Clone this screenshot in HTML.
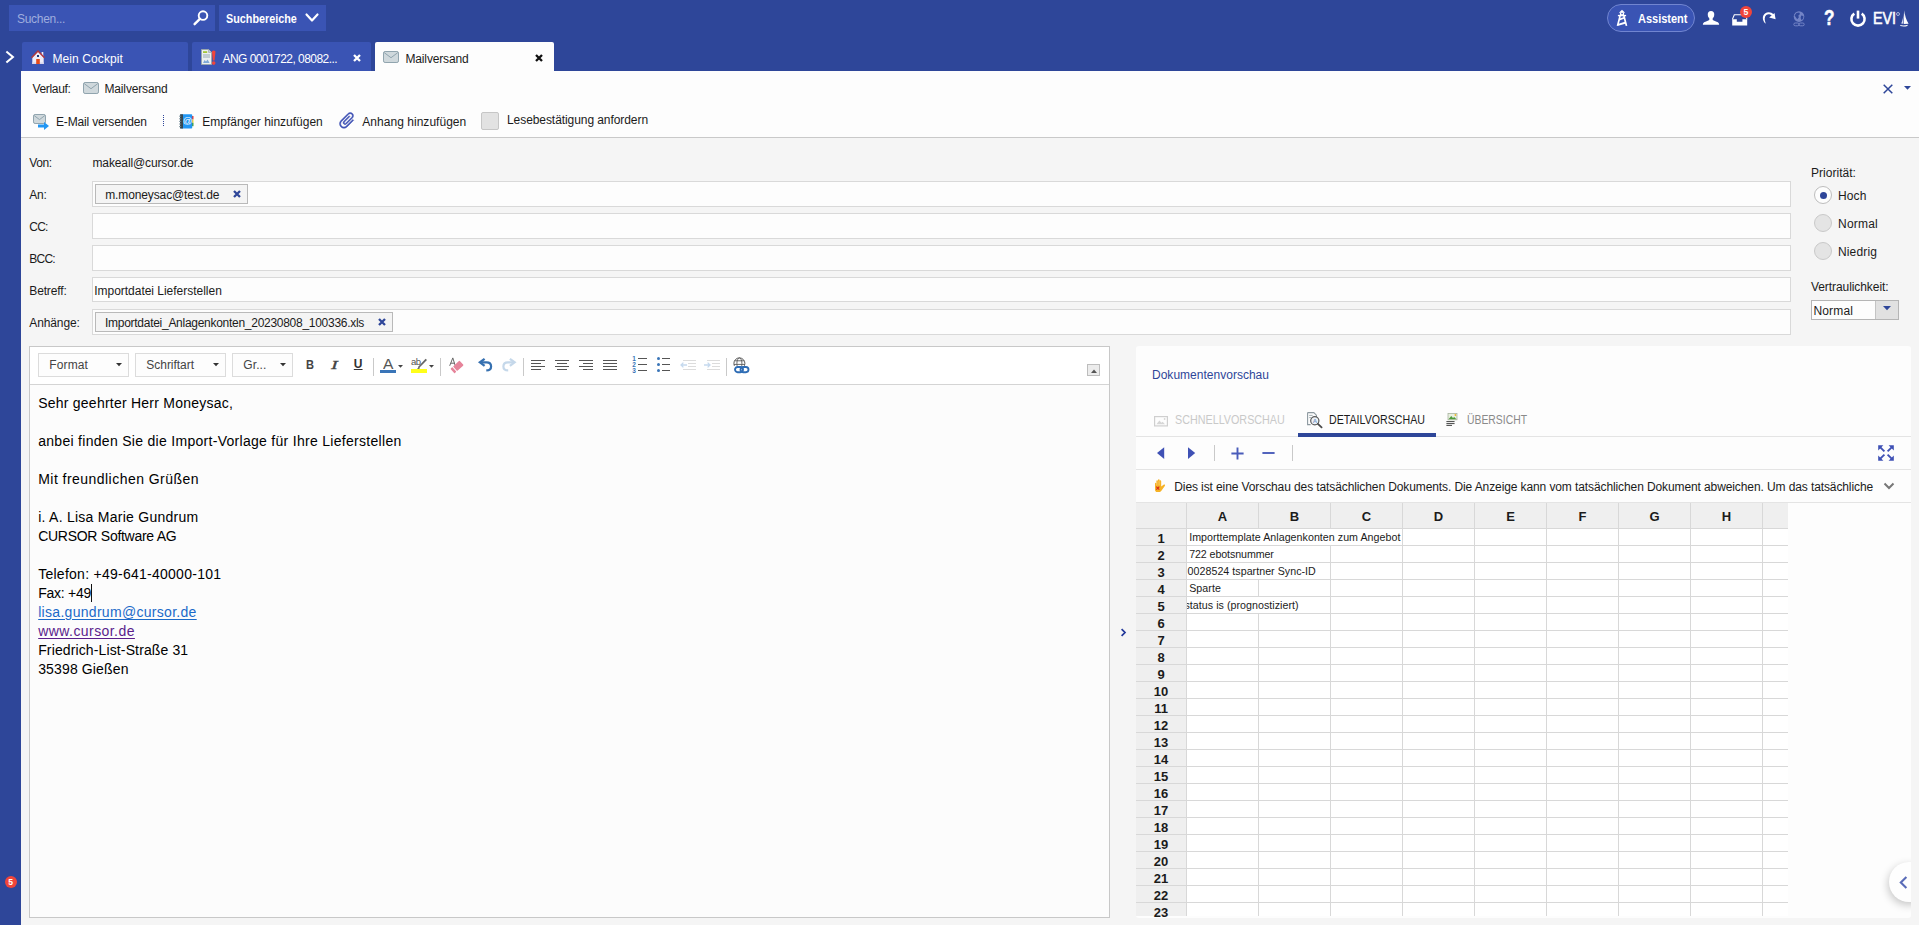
<!DOCTYPE html><html><head><meta charset="utf-8"><title>Mailversand</title><style>html,body{margin:0;padding:0;overflow:hidden;background:#f5f5f5}body{width:1919px;height:925px;position:relative;font-family:'Liberation Sans',sans-serif}svg{display:block;overflow:visible}</style></head><body>
<div style="position:absolute;left:0px;top:0px;width:1919px;height:925px;box-sizing:border-box;background:#f5f5f5;"></div>
<div style="position:absolute;left:0px;top:0px;width:1919px;height:71px;box-sizing:border-box;background:#2e4699;"></div>
<div style="position:absolute;left:0px;top:0px;width:21px;height:925px;box-sizing:border-box;background:#2e4699;"></div>
<div style="position:absolute;left:21px;top:71px;width:1898px;height:66px;box-sizing:border-box;background:#fdfdfd;"></div>
<div style="position:absolute;left:21px;top:137px;width:1898px;height:1px;box-sizing:border-box;background:#c9c9c9;"></div>
<div style="position:absolute;left:9px;top:5px;width:206px;height:26px;box-sizing:border-box;background:#3a54b4;"></div>
<span style="position:absolute;left:17px;top:9.5px;line-height:18px;height:18px;white-space:pre;font-family:'Liberation Sans',sans-serif;font-size:12px;font-weight:400;font-style:normal;color:#9fadde;letter-spacing:-0.300px;">Suchen...</span>
<svg style="position:absolute;left:192px;top:9px;" width="18" height="18" viewBox="0 0 18 18"><circle cx="11" cy="6.6" r="4.3" fill="none" stroke="#fff" stroke-width="1.9"/><path d="M7.9 9.8 L2.6 15.2" stroke="#fff" stroke-width="2.4" stroke-linecap="round"/></svg>
<div style="position:absolute;left:219px;top:5px;width:107px;height:26px;box-sizing:border-box;background:#3a54b4;"></div>
<span style="position:absolute;left:226.3px;top:9.5px;line-height:18px;height:18px;white-space:pre;font-family:'Liberation Sans',sans-serif;font-size:12px;font-weight:700;font-style:normal;color:#fff;letter-spacing:0.000px;transform-origin:0 50%;transform:scaleX(0.8996);">Suchbereiche</span>
<svg style="position:absolute;left:305px;top:13px;" width="14" height="10" viewBox="0 0 14 10"><path d="M1.5 1.5 L7 7.5 L12.5 1.5" fill="none" stroke="#fff" stroke-width="2.2" stroke-linecap="round" stroke-linejoin="round"/></svg>
<div style="position:absolute;left:1607px;top:4px;width:88px;height:28px;box-sizing:border-box;background:#3a54b4;border:1px solid #7185d0;border-radius:14px;"></div>
<span style="position:absolute;left:1637.5px;top:9.5px;line-height:18px;height:18px;white-space:pre;font-family:'Liberation Sans',sans-serif;font-size:12px;font-weight:700;font-style:normal;color:#fff;letter-spacing:0.000px;transform-origin:0 50%;transform:scaleX(0.9161);">Assistent</span>
<svg style="position:absolute;left:5px;top:50px;" width="10" height="14" viewBox="0 0 10 14"><path d="M2.2 2.2 L7.9 7 L2.2 11.8" fill="none" stroke="#fff" stroke-width="2.1" stroke-linecap="square" stroke-linejoin="miter"/></svg>
<div style="position:absolute;left:22px;top:42px;width:166px;height:29px;box-sizing:border-box;background:#3a54b4;border-radius:2px 2px 0 0;"></div>
<span style="position:absolute;left:52.5px;top:49.5px;line-height:18px;height:18px;white-space:pre;font-family:'Liberation Sans',sans-serif;font-size:12px;font-weight:400;font-style:normal;color:#fff;letter-spacing:0.095px;">Mein Cockpit</span>
<div style="position:absolute;left:192px;top:42px;width:179px;height:29px;box-sizing:border-box;background:#3a54b4;border-radius:2px 2px 0 0;"></div>
<span style="position:absolute;left:222.5px;top:49.5px;line-height:18px;height:18px;white-space:pre;font-family:'Liberation Sans',sans-serif;font-size:12px;font-weight:400;font-style:normal;color:#fff;letter-spacing:-0.552px;">ANG 0001722, 08082...</span>
<div style="position:absolute;left:375px;top:42px;width:179px;height:29px;box-sizing:border-box;background:#fdfdfd;border-radius:2px 2px 0 0;"></div>
<span style="position:absolute;left:405.5px;top:49.5px;line-height:18px;height:18px;white-space:pre;font-family:'Liberation Sans',sans-serif;font-size:12px;font-weight:400;font-style:normal;color:#1b1b1b;letter-spacing:-0.155px;">Mailversand</span>
<span style="position:absolute;left:32.5px;top:79.5px;line-height:18px;height:18px;white-space:pre;font-family:'Liberation Sans',sans-serif;font-size:12px;font-weight:400;font-style:normal;color:#1b1b1b;letter-spacing:-0.338px;">Verlauf:</span>
<span style="position:absolute;left:104.5px;top:79.5px;line-height:18px;height:18px;white-space:pre;font-family:'Liberation Sans',sans-serif;font-size:12px;font-weight:400;font-style:normal;color:#1b1b1b;letter-spacing:-0.155px;">Mailversand</span>
<span style="position:absolute;left:56px;top:112.5px;line-height:18px;height:18px;white-space:pre;font-family:'Liberation Sans',sans-serif;font-size:12px;font-weight:400;font-style:normal;color:#1b1b1b;letter-spacing:-0.167px;">E-Mail versenden</span>
<span style="position:absolute;left:202.3px;top:112.5px;line-height:18px;height:18px;white-space:pre;font-family:'Liberation Sans',sans-serif;font-size:12px;font-weight:400;font-style:normal;color:#1b1b1b;letter-spacing:-0.018px;">Empfänger hinzufügen</span>
<span style="position:absolute;left:362.3px;top:112.5px;line-height:18px;height:18px;white-space:pre;font-family:'Liberation Sans',sans-serif;font-size:12px;font-weight:400;font-style:normal;color:#1b1b1b;letter-spacing:0.033px;">Anhang hinzufügen</span>
<div style="position:absolute;left:481px;top:112px;width:18px;height:18px;box-sizing:border-box;background:#e2e2e2;border:1px solid #c6c6c6;border-radius:2px;"></div>
<span style="position:absolute;left:507px;top:111.0px;line-height:18px;height:18px;white-space:pre;font-family:'Liberation Sans',sans-serif;font-size:12px;font-weight:400;font-style:normal;color:#1b1b1b;letter-spacing:-0.071px;">Lesebestätigung anfordern</span>
<span style="position:absolute;left:29.3px;top:154.0px;line-height:18px;height:18px;white-space:pre;font-family:'Liberation Sans',sans-serif;font-size:12px;font-weight:400;font-style:normal;color:#1b1b1b;letter-spacing:-0.433px;">Von:</span>
<span style="position:absolute;left:29.3px;top:186.0px;line-height:18px;height:18px;white-space:pre;font-family:'Liberation Sans',sans-serif;font-size:12px;font-weight:400;font-style:normal;color:#1b1b1b;letter-spacing:-0.239px;">An:</span>
<span style="position:absolute;left:29.3px;top:218.0px;line-height:18px;height:18px;white-space:pre;font-family:'Liberation Sans',sans-serif;font-size:12px;font-weight:400;font-style:normal;color:#1b1b1b;letter-spacing:-0.791px;">CC:</span>
<span style="position:absolute;left:29.3px;top:250.0px;line-height:18px;height:18px;white-space:pre;font-family:'Liberation Sans',sans-serif;font-size:12px;font-weight:400;font-style:normal;color:#1b1b1b;letter-spacing:-0.793px;">BCC:</span>
<span style="position:absolute;left:29.3px;top:281.7px;line-height:18px;height:18px;white-space:pre;font-family:'Liberation Sans',sans-serif;font-size:12px;font-weight:400;font-style:normal;color:#1b1b1b;letter-spacing:-0.146px;">Betreff:</span>
<span style="position:absolute;left:29.3px;top:313.8px;line-height:18px;height:18px;white-space:pre;font-family:'Liberation Sans',sans-serif;font-size:12px;font-weight:400;font-style:normal;color:#1b1b1b;letter-spacing:-0.124px;">Anhänge:</span>
<span style="position:absolute;left:92.5px;top:154.0px;line-height:18px;height:18px;white-space:pre;font-family:'Liberation Sans',sans-serif;font-size:12px;font-weight:400;font-style:normal;color:#1b1b1b;letter-spacing:-0.123px;">makeall@cursor.de</span>
<div style="position:absolute;left:92px;top:181px;width:1699px;height:26px;box-sizing:border-box;background:#fdfdfd;border:1px solid #d9d9d9;"></div>
<div style="position:absolute;left:92px;top:213px;width:1699px;height:26px;box-sizing:border-box;background:#fdfdfd;border:1px solid #d9d9d9;"></div>
<div style="position:absolute;left:92px;top:245px;width:1699px;height:26px;box-sizing:border-box;background:#fdfdfd;border:1px solid #d9d9d9;"></div>
<div style="position:absolute;left:92px;top:277px;width:1699px;height:25px;box-sizing:border-box;background:#fdfdfd;border:1px solid #d9d9d9;"></div>
<div style="position:absolute;left:92px;top:309px;width:1699px;height:26px;box-sizing:border-box;background:#fdfdfd;border:1px solid #d9d9d9;"></div>
<div style="position:absolute;left:95px;top:184px;width:153px;height:20px;box-sizing:border-box;background:#f4f4f4;border:1px solid #b9b9b9;"></div>
<span style="position:absolute;left:105.2px;top:186.0px;line-height:18px;height:18px;white-space:pre;font-family:'Liberation Sans',sans-serif;font-size:12px;font-weight:400;font-style:normal;color:#1b1b1b;letter-spacing:-0.119px;">m.moneysac@test.de</span>
<div style="position:absolute;left:95px;top:312px;width:298px;height:20px;box-sizing:border-box;background:#f4f4f4;border:1px solid #b9b9b9;"></div>
<span style="position:absolute;left:105px;top:313.8px;line-height:18px;height:18px;white-space:pre;font-family:'Liberation Sans',sans-serif;font-size:12px;font-weight:400;font-style:normal;color:#1b1b1b;letter-spacing:-0.277px;">Importdatei_Anlagenkonten_20230808_100336.xls</span>
<span style="position:absolute;left:94.2px;top:281.7px;line-height:18px;height:18px;white-space:pre;font-family:'Liberation Sans',sans-serif;font-size:12px;font-weight:400;font-style:normal;color:#1b1b1b;letter-spacing:-0.019px;">Importdatei Lieferstellen</span>
<svg style="position:absolute;left:233.4px;top:189.7px;" width="8" height="8" viewBox="0 0 8 8"><path d="M1 1 L7 7 M7 1 L1 7" stroke="#2e4699" stroke-width="2.3" stroke-linecap="butt"/></svg>
<svg style="position:absolute;left:378.3px;top:317.6px;" width="8" height="8" viewBox="0 0 8 8"><path d="M1 1 L7 7 M7 1 L1 7" stroke="#2e4699" stroke-width="2.3" stroke-linecap="butt"/></svg>
<span style="position:absolute;left:1811px;top:164.0px;line-height:18px;height:18px;white-space:pre;font-family:'Liberation Sans',sans-serif;font-size:12px;font-weight:400;font-style:normal;color:#1b1b1b;letter-spacing:0.031px;">Priorität:</span>
<div style="position:absolute;left:1814px;top:186px;width:18px;height:18px;box-sizing:border-box;background:#fdfdfd;border:1px solid #bdbdbd;border-radius:9px;"></div>
<div style="position:absolute;left:1819.5px;top:191.5px;width:7px;height:7px;box-sizing:border-box;background:#2e4699;border-radius:4px;"></div>
<span style="position:absolute;left:1838px;top:186.8px;line-height:18px;height:18px;white-space:pre;font-family:'Liberation Sans',sans-serif;font-size:12px;font-weight:400;font-style:normal;color:#1b1b1b;letter-spacing:0.121px;">Hoch</span>
<div style="position:absolute;left:1814px;top:214px;width:18px;height:18px;box-sizing:border-box;background:#e4e4e4;border:1px solid #c9c9c9;border-radius:9px;"></div>
<span style="position:absolute;left:1838px;top:214.8px;line-height:18px;height:18px;white-space:pre;font-family:'Liberation Sans',sans-serif;font-size:12px;font-weight:400;font-style:normal;color:#1b1b1b;letter-spacing:0.221px;">Normal</span>
<div style="position:absolute;left:1814px;top:242px;width:18px;height:18px;box-sizing:border-box;background:#e4e4e4;border:1px solid #c9c9c9;border-radius:9px;"></div>
<span style="position:absolute;left:1838px;top:242.8px;line-height:18px;height:18px;white-space:pre;font-family:'Liberation Sans',sans-serif;font-size:12px;font-weight:400;font-style:normal;color:#1b1b1b;letter-spacing:0.141px;">Niedrig</span>
<span style="position:absolute;left:1811px;top:278.0px;line-height:18px;height:18px;white-space:pre;font-family:'Liberation Sans',sans-serif;font-size:12px;font-weight:400;font-style:normal;color:#1b1b1b;letter-spacing:-0.075px;">Vertraulichkeit:</span>
<div style="position:absolute;left:1811px;top:300px;width:88px;height:20px;box-sizing:border-box;background:#fdfdfd;border:1px solid #b5b5b5;"></div>
<div style="position:absolute;left:1875px;top:301px;width:23px;height:18px;box-sizing:border-box;background:#e1e1e1;border-left:1px solid #c4c4c4;"></div>
<span style="position:absolute;left:1813.5px;top:301.5px;line-height:18px;height:18px;white-space:pre;font-family:'Liberation Sans',sans-serif;font-size:12px;font-weight:400;font-style:normal;color:#1b1b1b;letter-spacing:0.138px;">Normal</span>
<svg style="position:absolute;left:1883px;top:306px;" width="8" height="5" viewBox="0 0 8 5"><path d="M0 0 L8 0 L4 4.2 Z" fill="#2e4699"/></svg>
<div style="position:absolute;left:29px;top:346px;width:1081px;height:572px;box-sizing:border-box;background:#fcfcfc;border:1px solid #c8c8c8;"></div>
<div style="position:absolute;left:30px;top:347px;width:1079px;height:37px;box-sizing:border-box;background:#ffffff;"></div>
<div style="position:absolute;left:30px;top:384px;width:1079px;height:1px;box-sizing:border-box;background:#d4d4d4;"></div>
<div style="position:absolute;left:38px;top:353px;width:91px;height:24px;box-sizing:border-box;background:#fdfdfd;border:1px solid #dcdcdc;"></div>
<span style="position:absolute;left:49.3px;top:355.8px;line-height:18px;height:18px;white-space:pre;font-family:'Liberation Sans',sans-serif;font-size:12px;font-weight:400;font-style:normal;color:#444;letter-spacing:0.131px;">Format</span>
<svg style="position:absolute;left:116px;top:363.3px;" width="6" height="3.4" viewBox="0 0 6 3.4"><path d="M0 0 L6 0 L3 3.2 Z" fill="#333"/></svg>
<div style="position:absolute;left:135px;top:353px;width:91px;height:24px;box-sizing:border-box;background:#fdfdfd;border:1px solid #dcdcdc;"></div>
<span style="position:absolute;left:146.3px;top:355.8px;line-height:18px;height:18px;white-space:pre;font-family:'Liberation Sans',sans-serif;font-size:12px;font-weight:400;font-style:normal;color:#444;letter-spacing:-0.032px;">Schriftart</span>
<svg style="position:absolute;left:213px;top:363.3px;" width="6" height="3.4" viewBox="0 0 6 3.4"><path d="M0 0 L6 0 L3 3.2 Z" fill="#333"/></svg>
<div style="position:absolute;left:232px;top:353px;width:61px;height:24px;box-sizing:border-box;background:#fdfdfd;border:1px solid #dcdcdc;"></div>
<span style="position:absolute;left:243.3px;top:355.8px;line-height:18px;height:18px;white-space:pre;font-family:'Liberation Sans',sans-serif;font-size:12px;font-weight:400;font-style:normal;color:#444;letter-spacing:0.106px;">Gr...</span>
<svg style="position:absolute;left:280px;top:363.3px;" width="6" height="3.4" viewBox="0 0 6 3.4"><path d="M0 0 L6 0 L3 3.2 Z" fill="#333"/></svg>
<span style="position:absolute;left:306.3px;top:355.8px;line-height:18px;height:18px;white-space:pre;font-family:'Liberation Sans',sans-serif;font-size:12px;font-weight:700;font-style:normal;color:#444;letter-spacing:0.000px;transform-origin:0 50%;transform:scaleX(0.9225);">B</span>
<span style="position:absolute;left:331.2px;top:354.6px;line-height:20px;height:20px;white-space:pre;font-family:'Liberation Serif',sans-serif;font-size:13.5px;font-weight:400;font-style:italic;color:#444;letter-spacing:0.000px;-webkit-text-stroke:0.3px #444;transform-origin:0 50%;transform:scaleX(1.5111);">I</span>
<span style="position:absolute;left:353.8px;top:355.3px;line-height:18px;height:18px;white-space:pre;font-family:'Liberation Sans',sans-serif;font-size:12px;font-weight:700;font-style:normal;color:#333;letter-spacing:0.064px;text-decoration:underline;">U</span>
<div style="position:absolute;left:373px;top:358px;width:1px;height:18px;box-sizing:border-box;background:#c9c9c9;"></div>
<div style="position:absolute;left:440px;top:358px;width:1px;height:18px;box-sizing:border-box;background:#c9c9c9;"></div>
<div style="position:absolute;left:523px;top:358px;width:1px;height:18px;box-sizing:border-box;background:#c9c9c9;"></div>
<div style="position:absolute;left:726px;top:358px;width:1px;height:18px;box-sizing:border-box;background:#c9c9c9;"></div>
<span style="position:absolute;left:38.2px;top:392.5px;line-height:20px;height:20px;white-space:pre;font-family:'Liberation Sans',sans-serif;font-size:14px;font-weight:400;font-style:normal;color:#000000;letter-spacing:0.235px;">Sehr geehrter Herr Moneysac,</span>
<span style="position:absolute;left:38.2px;top:430.5px;line-height:20px;height:20px;white-space:pre;font-family:'Liberation Sans',sans-serif;font-size:14px;font-weight:400;font-style:normal;color:#000000;letter-spacing:0.294px;">anbei finden Sie die Import-Vorlage für Ihre Lieferstellen</span>
<span style="position:absolute;left:38.2px;top:468.5px;line-height:20px;height:20px;white-space:pre;font-family:'Liberation Sans',sans-serif;font-size:14px;font-weight:400;font-style:normal;color:#000000;letter-spacing:0.461px;">Mit freundlichen Grüßen</span>
<span style="position:absolute;left:38.2px;top:506.5px;line-height:20px;height:20px;white-space:pre;font-family:'Liberation Sans',sans-serif;font-size:14px;font-weight:400;font-style:normal;color:#000000;letter-spacing:0.256px;">i. A. Lisa Marie Gundrum</span>
<span style="position:absolute;left:38.2px;top:525.5px;line-height:20px;height:20px;white-space:pre;font-family:'Liberation Sans',sans-serif;font-size:14px;font-weight:400;font-style:normal;color:#000000;letter-spacing:-0.275px;">CURSOR Software AG</span>
<span style="position:absolute;left:38.2px;top:563.5px;line-height:20px;height:20px;white-space:pre;font-family:'Liberation Sans',sans-serif;font-size:14px;font-weight:400;font-style:normal;color:#000000;letter-spacing:0.261px;">Telefon: +49-641-40000-101</span>
<span style="position:absolute;left:38.2px;top:582.5px;line-height:20px;height:20px;white-space:pre;font-family:'Liberation Sans',sans-serif;font-size:14px;font-weight:400;font-style:normal;color:#000000;letter-spacing:-0.259px;">Fax: +49</span>
<span style="position:absolute;left:38.2px;top:601.5px;line-height:20px;height:20px;white-space:pre;font-family:'Liberation Sans',sans-serif;font-size:14px;font-weight:400;font-style:normal;color:#1b6ac9;letter-spacing:0.298px;text-decoration:underline;text-decoration-thickness:1px;text-underline-offset:2px;">lisa.gundrum@cursor.de</span>
<span style="position:absolute;left:38.2px;top:620.5px;line-height:20px;height:20px;white-space:pre;font-family:'Liberation Sans',sans-serif;font-size:14px;font-weight:400;font-style:normal;color:#5a1d8c;letter-spacing:0.435px;text-decoration:underline;text-decoration-thickness:1px;text-underline-offset:2px;">www.cursor.de</span>
<span style="position:absolute;left:38.2px;top:639.5px;line-height:20px;height:20px;white-space:pre;font-family:'Liberation Sans',sans-serif;font-size:14px;font-weight:400;font-style:normal;color:#000000;letter-spacing:0.127px;">Friedrich-List-Straße 31</span>
<span style="position:absolute;left:38.2px;top:658.5px;line-height:20px;height:20px;white-space:pre;font-family:'Liberation Sans',sans-serif;font-size:14px;font-weight:400;font-style:normal;color:#000000;letter-spacing:0.139px;">35398 Gießen</span>
<div style="position:absolute;left:91px;top:584px;width:1px;height:18px;box-sizing:border-box;background:#111;"></div>
<div style="position:absolute;left:1087px;top:364px;width:13px;height:12px;box-sizing:border-box;background:#ececec;border:1px solid #bdbdbd;"></div>
<svg style="position:absolute;left:1090.5px;top:368.5px;" width="6" height="4" viewBox="0 0 6 4"><path d="M0 4 L6 4 L3 0.4 Z" fill="#555"/></svg>
<svg style="position:absolute;left:1119.5px;top:628px;" width="7" height="9" viewBox="0 0 7 9"><path d="M1.6 1.1 L5 4.5 L1.6 7.9" fill="none" stroke="#22389a" stroke-width="1.7"/></svg>
<div style="position:absolute;left:1136px;top:346px;width:775px;height:572px;box-sizing:border-box;background:#fdfdfd;border-radius:3px;"></div>
<span style="position:absolute;left:1152px;top:365.6px;line-height:18px;height:18px;white-space:pre;font-family:'Liberation Sans',sans-serif;font-size:12px;font-weight:400;font-style:normal;color:#2e4699;letter-spacing:0.015px;">Dokumentenvorschau</span>
<span style="position:absolute;left:1175.4px;top:410.6px;line-height:18px;height:18px;white-space:pre;font-family:'Liberation Sans',sans-serif;font-size:12.3px;font-weight:400;font-style:normal;color:#c9c9c9;letter-spacing:0.000px;transform-origin:0 50%;transform:scaleX(0.8748);">SCHNELLVORSCHAU</span>
<span style="position:absolute;left:1328.5px;top:410.6px;line-height:18px;height:18px;white-space:pre;font-family:'Liberation Sans',sans-serif;font-size:12.3px;font-weight:400;font-style:normal;color:#1b1b1b;letter-spacing:0.000px;transform-origin:0 50%;transform:scaleX(0.8646);">DETAILVORSCHAU</span>
<span style="position:absolute;left:1466.5px;top:410.6px;line-height:18px;height:18px;white-space:pre;font-family:'Liberation Sans',sans-serif;font-size:12.3px;font-weight:400;font-style:normal;color:#8a8a8a;letter-spacing:0.000px;transform-origin:0 50%;transform:scaleX(0.8443);">ÜBERSICHT</span>
<div style="position:absolute;left:1136px;top:436px;width:775px;height:1px;box-sizing:border-box;background:#e4e4e4;"></div>
<div style="position:absolute;left:1298px;top:433px;width:138px;height:4px;box-sizing:border-box;background:#2e4699;"></div>
<div style="position:absolute;left:1136px;top:469px;width:775px;height:1px;box-sizing:border-box;background:#e4e4e4;"></div>
<div style="position:absolute;left:1136px;top:502px;width:775px;height:1px;box-sizing:border-box;background:#e4e4e4;"></div>
<svg style="position:absolute;left:1156px;top:447px;" width="9" height="12" viewBox="0 0 9 12"><path d="M8.2 0.3 L8.2 11.9 L1 6.1 Z" fill="#3f51b5"/></svg>
<svg style="position:absolute;left:1187px;top:447px;" width="9" height="12" viewBox="0 0 9 12"><path d="M1 0.3 L1 11.9 L8.2 6.1 Z" fill="#3f51b5"/></svg>
<div style="position:absolute;left:1214px;top:445px;width:1px;height:16px;box-sizing:border-box;background:#c9c9c9;"></div>
<svg style="position:absolute;left:1231px;top:446.5px;" width="13" height="13" viewBox="0 0 13 13"><path d="M6.5 0.4 V12.6 M0.4 6.5 H12.6" stroke="#4a5cba" stroke-width="1.9"/></svg>
<svg style="position:absolute;left:1261.5px;top:452px;" width="13" height="2" viewBox="0 0 13 2"><path d="M0.4 1 H12.6" stroke="#4a5cba" stroke-width="1.9"/></svg>
<div style="position:absolute;left:1291.5px;top:445px;width:1px;height:16px;box-sizing:border-box;background:#c9c9c9;"></div>
<span style="position:absolute;left:1174.3px;top:477.8px;line-height:18px;height:18px;white-space:pre;font-family:'Liberation Sans',sans-serif;font-size:12px;font-weight:400;font-style:normal;color:#1b1b1b;letter-spacing:-0.103px;">Dies ist eine Vorschau des tatsächlichen Dokuments. Die Anzeige kann vom tatsächlichen Dokument abweichen. Um das tatsächliche</span>
<svg style="position:absolute;left:1883px;top:481.6px;" width="12" height="8" viewBox="0 0 12 8"><path d="M1.5 1.5 L6 6 L10.5 1.5" fill="none" stroke="#777" stroke-width="2"/></svg>
<div style="position:absolute;left:1136px;top:503px;width:652px;height:413px;box-sizing:border-box;background:#ffffff;"></div><div style="position:absolute;left:1136px;top:503px;width:652px;height:25px;box-sizing:border-box;background:#efefef;"></div><div style="position:absolute;left:1136px;top:503px;width:50px;height:413px;box-sizing:border-box;background:#efefef;"></div><div style="position:absolute;left:1186px;top:503px;width:1px;height:413px;box-sizing:border-box;background:#d8d8d8;"></div><div style="position:absolute;left:1258px;top:503px;width:1px;height:413px;box-sizing:border-box;background:#d8d8d8;"></div><div style="position:absolute;left:1330px;top:503px;width:1px;height:413px;box-sizing:border-box;background:#d8d8d8;"></div><div style="position:absolute;left:1402px;top:503px;width:1px;height:413px;box-sizing:border-box;background:#d8d8d8;"></div><div style="position:absolute;left:1474px;top:503px;width:1px;height:413px;box-sizing:border-box;background:#d8d8d8;"></div><div style="position:absolute;left:1546px;top:503px;width:1px;height:413px;box-sizing:border-box;background:#d8d8d8;"></div><div style="position:absolute;left:1618px;top:503px;width:1px;height:413px;box-sizing:border-box;background:#d8d8d8;"></div><div style="position:absolute;left:1690px;top:503px;width:1px;height:413px;box-sizing:border-box;background:#d8d8d8;"></div><div style="position:absolute;left:1762px;top:503px;width:1px;height:413px;box-sizing:border-box;background:#d8d8d8;"></div><div style="position:absolute;left:1136px;top:528px;width:652px;height:1px;box-sizing:border-box;background:#d8d8d8;"></div><div style="position:absolute;left:1136px;top:545px;width:652px;height:1px;box-sizing:border-box;background:#d8d8d8;"></div><div style="position:absolute;left:1136px;top:562px;width:652px;height:1px;box-sizing:border-box;background:#d8d8d8;"></div><div style="position:absolute;left:1136px;top:579px;width:652px;height:1px;box-sizing:border-box;background:#d8d8d8;"></div><div style="position:absolute;left:1136px;top:596px;width:652px;height:1px;box-sizing:border-box;background:#d8d8d8;"></div><div style="position:absolute;left:1136px;top:613px;width:652px;height:1px;box-sizing:border-box;background:#d8d8d8;"></div><div style="position:absolute;left:1136px;top:630px;width:652px;height:1px;box-sizing:border-box;background:#d8d8d8;"></div><div style="position:absolute;left:1136px;top:647px;width:652px;height:1px;box-sizing:border-box;background:#d8d8d8;"></div><div style="position:absolute;left:1136px;top:664px;width:652px;height:1px;box-sizing:border-box;background:#d8d8d8;"></div><div style="position:absolute;left:1136px;top:681px;width:652px;height:1px;box-sizing:border-box;background:#d8d8d8;"></div><div style="position:absolute;left:1136px;top:698px;width:652px;height:1px;box-sizing:border-box;background:#d8d8d8;"></div><div style="position:absolute;left:1136px;top:715px;width:652px;height:1px;box-sizing:border-box;background:#d8d8d8;"></div><div style="position:absolute;left:1136px;top:732px;width:652px;height:1px;box-sizing:border-box;background:#d8d8d8;"></div><div style="position:absolute;left:1136px;top:749px;width:652px;height:1px;box-sizing:border-box;background:#d8d8d8;"></div><div style="position:absolute;left:1136px;top:766px;width:652px;height:1px;box-sizing:border-box;background:#d8d8d8;"></div><div style="position:absolute;left:1136px;top:783px;width:652px;height:1px;box-sizing:border-box;background:#d8d8d8;"></div><div style="position:absolute;left:1136px;top:800px;width:652px;height:1px;box-sizing:border-box;background:#d8d8d8;"></div><div style="position:absolute;left:1136px;top:817px;width:652px;height:1px;box-sizing:border-box;background:#d8d8d8;"></div><div style="position:absolute;left:1136px;top:834px;width:652px;height:1px;box-sizing:border-box;background:#d8d8d8;"></div><div style="position:absolute;left:1136px;top:851px;width:652px;height:1px;box-sizing:border-box;background:#d8d8d8;"></div><div style="position:absolute;left:1136px;top:868px;width:652px;height:1px;box-sizing:border-box;background:#d8d8d8;"></div><div style="position:absolute;left:1136px;top:885px;width:652px;height:1px;box-sizing:border-box;background:#d8d8d8;"></div><div style="position:absolute;left:1136px;top:902px;width:652px;height:1px;box-sizing:border-box;background:#d8d8d8;"></div>
<div style="position:absolute;left:1258px;top:529px;width:1px;height:16px;box-sizing:border-box;background:#ffffff;"></div>
<div style="position:absolute;left:1330px;top:529px;width:1px;height:16px;box-sizing:border-box;background:#ffffff;"></div>
<div style="position:absolute;left:1258px;top:546px;width:1px;height:16px;box-sizing:border-box;background:#ffffff;"></div>
<div style="position:absolute;left:1258px;top:563px;width:1px;height:16px;box-sizing:border-box;background:#ffffff;"></div>
<div style="position:absolute;left:1258px;top:597px;width:1px;height:16px;box-sizing:border-box;background:#ffffff;"></div>
<div style="position:absolute;left:1202.5px;top:508px;width:40px;height:18px;line-height:18px;text-align:center;font-size:13px;font-weight:700;color:#1b1b1b">A</div>
<div style="position:absolute;left:1274.5px;top:508px;width:40px;height:18px;line-height:18px;text-align:center;font-size:13px;font-weight:700;color:#1b1b1b">B</div>
<div style="position:absolute;left:1346.5px;top:508px;width:40px;height:18px;line-height:18px;text-align:center;font-size:13px;font-weight:700;color:#1b1b1b">C</div>
<div style="position:absolute;left:1418.5px;top:508px;width:40px;height:18px;line-height:18px;text-align:center;font-size:13px;font-weight:700;color:#1b1b1b">D</div>
<div style="position:absolute;left:1490.5px;top:508px;width:40px;height:18px;line-height:18px;text-align:center;font-size:13px;font-weight:700;color:#1b1b1b">E</div>
<div style="position:absolute;left:1562.5px;top:508px;width:40px;height:18px;line-height:18px;text-align:center;font-size:13px;font-weight:700;color:#1b1b1b">F</div>
<div style="position:absolute;left:1634.5px;top:508px;width:40px;height:18px;line-height:18px;text-align:center;font-size:13px;font-weight:700;color:#1b1b1b">G</div>
<div style="position:absolute;left:1706.5px;top:508px;width:40px;height:18px;line-height:18px;text-align:center;font-size:13px;font-weight:700;color:#1b1b1b">H</div>
<div style="position:absolute;left:1141px;top:529.7px;width:40px;height:18px;overflow:hidden;line-height:18px;text-align:center;font-size:13px;font-weight:700;color:#1b1b1b">1</div>
<div style="position:absolute;left:1141px;top:546.7px;width:40px;height:18px;overflow:hidden;line-height:18px;text-align:center;font-size:13px;font-weight:700;color:#1b1b1b">2</div>
<div style="position:absolute;left:1141px;top:563.7px;width:40px;height:18px;overflow:hidden;line-height:18px;text-align:center;font-size:13px;font-weight:700;color:#1b1b1b">3</div>
<div style="position:absolute;left:1141px;top:580.7px;width:40px;height:18px;overflow:hidden;line-height:18px;text-align:center;font-size:13px;font-weight:700;color:#1b1b1b">4</div>
<div style="position:absolute;left:1141px;top:597.7px;width:40px;height:18px;overflow:hidden;line-height:18px;text-align:center;font-size:13px;font-weight:700;color:#1b1b1b">5</div>
<div style="position:absolute;left:1141px;top:614.7px;width:40px;height:18px;overflow:hidden;line-height:18px;text-align:center;font-size:13px;font-weight:700;color:#1b1b1b">6</div>
<div style="position:absolute;left:1141px;top:631.7px;width:40px;height:18px;overflow:hidden;line-height:18px;text-align:center;font-size:13px;font-weight:700;color:#1b1b1b">7</div>
<div style="position:absolute;left:1141px;top:648.7px;width:40px;height:18px;overflow:hidden;line-height:18px;text-align:center;font-size:13px;font-weight:700;color:#1b1b1b">8</div>
<div style="position:absolute;left:1141px;top:665.7px;width:40px;height:18px;overflow:hidden;line-height:18px;text-align:center;font-size:13px;font-weight:700;color:#1b1b1b">9</div>
<div style="position:absolute;left:1141px;top:682.7px;width:40px;height:18px;overflow:hidden;line-height:18px;text-align:center;font-size:13px;font-weight:700;color:#1b1b1b">10</div>
<div style="position:absolute;left:1141px;top:699.7px;width:40px;height:18px;overflow:hidden;line-height:18px;text-align:center;font-size:13px;font-weight:700;color:#1b1b1b">11</div>
<div style="position:absolute;left:1141px;top:716.7px;width:40px;height:18px;overflow:hidden;line-height:18px;text-align:center;font-size:13px;font-weight:700;color:#1b1b1b">12</div>
<div style="position:absolute;left:1141px;top:733.7px;width:40px;height:18px;overflow:hidden;line-height:18px;text-align:center;font-size:13px;font-weight:700;color:#1b1b1b">13</div>
<div style="position:absolute;left:1141px;top:750.7px;width:40px;height:18px;overflow:hidden;line-height:18px;text-align:center;font-size:13px;font-weight:700;color:#1b1b1b">14</div>
<div style="position:absolute;left:1141px;top:767.7px;width:40px;height:18px;overflow:hidden;line-height:18px;text-align:center;font-size:13px;font-weight:700;color:#1b1b1b">15</div>
<div style="position:absolute;left:1141px;top:784.7px;width:40px;height:18px;overflow:hidden;line-height:18px;text-align:center;font-size:13px;font-weight:700;color:#1b1b1b">16</div>
<div style="position:absolute;left:1141px;top:801.7px;width:40px;height:18px;overflow:hidden;line-height:18px;text-align:center;font-size:13px;font-weight:700;color:#1b1b1b">17</div>
<div style="position:absolute;left:1141px;top:818.7px;width:40px;height:18px;overflow:hidden;line-height:18px;text-align:center;font-size:13px;font-weight:700;color:#1b1b1b">18</div>
<div style="position:absolute;left:1141px;top:835.7px;width:40px;height:18px;overflow:hidden;line-height:18px;text-align:center;font-size:13px;font-weight:700;color:#1b1b1b">19</div>
<div style="position:absolute;left:1141px;top:852.7px;width:40px;height:18px;overflow:hidden;line-height:18px;text-align:center;font-size:13px;font-weight:700;color:#1b1b1b">20</div>
<div style="position:absolute;left:1141px;top:869.7px;width:40px;height:18px;overflow:hidden;line-height:18px;text-align:center;font-size:13px;font-weight:700;color:#1b1b1b">21</div>
<div style="position:absolute;left:1141px;top:886.7px;width:40px;height:18px;overflow:hidden;line-height:18px;text-align:center;font-size:13px;font-weight:700;color:#1b1b1b">22</div>
<div style="position:absolute;left:1141px;top:903.7px;width:40px;height:13px;overflow:hidden;line-height:18px;text-align:center;font-size:13px;font-weight:700;color:#1b1b1b">23</div>
<span style="position:absolute;left:1189.2px;top:529.4px;line-height:16px;height:16px;white-space:pre;font-family:'Liberation Sans',sans-serif;font-size:10.67px;font-weight:400;font-style:normal;color:#1b1b1b;letter-spacing:0.037px;">Importtemplate Anlagenkonten zum Angebot</span>
<span style="position:absolute;left:1189.2px;top:546.4px;line-height:16px;height:16px;white-space:pre;font-family:'Liberation Sans',sans-serif;font-size:10.67px;font-weight:400;font-style:normal;color:#1b1b1b;letter-spacing:-0.086px;">722 ebotsnummer</span>
<span style="position:absolute;left:1187.6px;top:563.4px;line-height:16px;height:16px;white-space:pre;font-family:'Liberation Sans',sans-serif;font-size:10.67px;font-weight:400;font-style:normal;color:#1b1b1b;letter-spacing:0.034px;">0028524 tspartner Sync-ID</span>
<span style="position:absolute;left:1189.2px;top:580.4px;line-height:16px;height:16px;white-space:pre;font-family:'Liberation Sans',sans-serif;font-size:10.67px;font-weight:400;font-style:normal;color:#1b1b1b;letter-spacing:0.066px;">Sparte</span>
<div style="position:absolute;left:1187px;top:597px;width:120px;height:16px;overflow:hidden"><span style="position:absolute;left:-2.5px;top:0.4px;line-height:16px;height:16px;white-space:pre;font-family:'Liberation Sans',sans-serif;font-size:10.67px;font-weight:400;font-style:normal;color:#1b1b1b;letter-spacing:0.037px;">status is (prognostiziert)</span></div>
<div style="position:absolute;left:4.5px;top:876px;width:12px;height:12px;box-sizing:border-box;background:#f0453a;border-radius:6px;"></div>
<span style="position:absolute;left:8.3px;top:876.3px;line-height:12px;height:12px;white-space:pre;font-family:'Liberation Sans',sans-serif;font-size:8.5px;font-weight:700;font-style:normal;color:#fff;letter-spacing:-0.017px;">5</span>
<div style="position:absolute;left:1860px;top:840px;width:51px;height:78px;overflow:hidden"><div style="position:absolute;left:29px;top:22px;width:40px;height:40px;border-radius:20px;background:#fefefe;box-shadow:-1px 3px 9px rgba(0,0,0,.22)"></div><svg style="position:absolute;left:38.5px;top:35.5px" width="9" height="13" viewBox="0 0 9 13"><path d="M7.4 1 L1.8 6.5 L7.4 12" fill="none" stroke="#5a6cb8" stroke-width="2.1"/></svg></div>
<svg style="position:absolute;left:1883px;top:84px;" width="10" height="10" viewBox="0 0 10 10"><path d="M0.7 0.7 L9.3 9.3 M9.3 0.7 L0.7 9.3" stroke="#2e4699" stroke-width="1.5"/></svg>
<svg style="position:absolute;left:1904px;top:85.5px;" width="7" height="4" viewBox="0 0 7 4"><path d="M0 0 L7 0 L3.5 3.8 Z" fill="#2e4699"/></svg>
<svg style="position:absolute;left:31px;top:50px;" width="14" height="14" viewBox="0 0 14 14"><rect x="10.6" y="2" width="1.7" height="4" fill="#eeecf8"/><path d="M1.3 7.4 L1.3 14 L12.7 14 L12.7 7.4 L7 1.4 Z" fill="#eeecf8"/><rect x="1.3" y="12.4" width="11.4" height="1.6" fill="#d9d7ee"/><path d="M0.5 7.8 L7 0.9 L13.5 7.8" fill="none" stroke="#b5373a" stroke-width="1.4" stroke-linejoin="miter"/><rect x="5.2" y="9" width="3.6" height="5" fill="#e64a19"/><rect x="6" y="5" width="2" height="2" fill="#1f3a7a"/></svg>
<svg style="position:absolute;left:201px;top:49px;" width="15" height="16" viewBox="0 0 15 16"><path d="M0.5 0.5 L7.6 0.5 L10.5 3.4 L10.5 15.5 L0.5 15.5 Z" fill="#eceff1" stroke="#9aa7ad" stroke-width="1"/><path d="M7.6 0.5 L7.6 3.4 L10.5 3.4" fill="#cfd8dc" stroke="#9aa7ad" stroke-width="0.8"/><rect x="2" y="2.2" width="4.2" height="1.8" fill="#a4c639"/><path d="M2 6 H9 M2 8 H9" stroke="#90a4ae" stroke-width="0.9"/><path d="M2 14 L3.6 11 L5 12.6 L6.6 10.4 L8.6 14 Z" fill="#7fa8d8"/><path d="M10.9 2.4 Q12.7 0.6 14.5 2.4 L13.5 11.4 H11.9 Z" fill="#f0453a"/><circle cx="12.7" cy="14.1" r="1.8" fill="#f0453a"/></svg>
<svg style="position:absolute;left:352.6px;top:53.5px;" width="8" height="8" viewBox="0 0 8 8"><path d="M1 1 L7 7 M7 1 L1 7" stroke="#ffffff" stroke-width="2.3" stroke-linecap="butt"/></svg>
<svg style="position:absolute;left:383px;top:51px;" width="16" height="12" viewBox="0 0 16 12"><rect x="0.5" y="0.5" width="15" height="11" rx="1.6" fill="#cfd8dc" stroke="#90a4ae"/><path d="M1.2 1.6 L8.0 6.720000000000001 L14.8 1.6" fill="none" stroke="#90a4ae" stroke-width="1"/></svg>
<svg style="position:absolute;left:535.2px;top:53.8px;" width="8" height="8" viewBox="0 0 8 8"><path d="M1 1 L7 7 M7 1 L1 7" stroke="#111111" stroke-width="2.3" stroke-linecap="butt"/></svg>
<svg style="position:absolute;left:83px;top:82px;" width="16" height="12" viewBox="0 0 16 12"><rect x="0.5" y="0.5" width="15" height="11" rx="1.6" fill="#cfd8dc" stroke="#90a4ae"/><path d="M1.2 1.6 L8.0 6.720000000000001 L14.8 1.6" fill="none" stroke="#90a4ae" stroke-width="1"/></svg>
<svg style="position:absolute;left:33px;top:114px;" width="13" height="10" viewBox="0 0 13 10"><rect x="0.5" y="0.5" width="12" height="9" rx="1.6" fill="#cfd8dc" stroke="#90a4ae"/><path d="M1.2 1.6 L6.5 5.6000000000000005 L11.8 1.6" fill="none" stroke="#90a4ae" stroke-width="1"/></svg>
<svg style="position:absolute;left:38px;top:122px;" width="11" height="8" viewBox="0 0 11 8"><path d="M0 2.6 H6 V0 L11 4 L6 8 V5.4 H0 Z" fill="#2196f3"/></svg>
<div style="position:absolute;left:163px;top:115px;width:1px;height:12px;background:repeating-linear-gradient(to bottom,#2e4699 0,#2e4699 1px,transparent 1px,transparent 2px)"></div>
<svg style="position:absolute;left:179px;top:113.5px;" width="15" height="15" viewBox="0 0 15 15"><rect x="11.5" y="2" width="3" height="3.4" fill="#e53935"/><rect x="11.5" y="5.4" width="3" height="3.4" fill="#fdd835"/><rect x="11.5" y="8.8" width="3" height="3.4" fill="#43a047"/><rect x="1.6" y="0.3" width="11.6" height="14.2" rx="0.8" fill="#2196f3"/><rect x="1" y="0.3" width="3" height="14.2" fill="#37474f"/><path d="M0 2.2 H2.2 M0 4.8 H2.2 M0 7.4 H2.2 M0 10 H2.2 M0 12.6 H2.2" stroke="#78909c" stroke-width="0.9"/><text x="8.5" y="10.4" font-family="Liberation Sans" font-size="9.4" font-weight="400" fill="#fff" text-anchor="middle">@</text></svg>
<svg style="position:absolute;left:338px;top:112px;" width="18" height="17" viewBox="0 0 18 17"><g transform="translate(9.1 8.6) rotate(45) scale(0.81) translate(-12.5 -12)"><path d="M16.5 6v11.5c0 2.21-1.79 4-4 4s-4-1.79-4-4V5c0-1.38 1.12-2.5 2.5-2.5s2.5 1.12 2.5 2.5v10.5c0 .55-.45 1-1 1s-1-.45-1-1V6H10v9.5c0 1.38 1.12 2.5 2.5 2.5s2.5-1.12 2.5-2.5V5c0-2.21-1.79-4-4-4S7 2.79 7 5v12.5c0 3.040 2.46 5.5 5.5 5.5s5.5-2.46 5.5-5.5V6h-1.5z" fill="#3f51b5" stroke="#3f51b5" stroke-width="0.55" stroke-linejoin="round"/></g></svg>
<svg style="position:absolute;left:1616px;top:10px;" width="12" height="16" viewBox="0 0 12 16"><path d="M6 -0.2 L9.1 2.7 H2.9 Z" fill="#fff"/><rect x="3.9" y="2.5" width="4.2" height="2.8" fill="#fff"/><rect x="5.3" y="3" width="1.5" height="1.2" fill="#3a54b4"/><rect x="1.9" y="4.9" width="8.2" height="1.4" fill="#fff"/><path d="M4.1 6 L1.5 15.9 M7.9 6 L10.5 15.9" stroke="#fff" stroke-width="1.7"/><path d="M3.2 9.6 L9 7.5" stroke="#fff" stroke-width="1.7"/><path d="M2 14.9 L9.9 12.5" stroke="#fff" stroke-width="1.9"/></svg>
<svg style="position:absolute;left:1703px;top:11px;" width="16" height="14" viewBox="0 0 16 14"><ellipse cx="8" cy="3.8" rx="3.25" ry="3.7" fill="#fff"/><rect x="6.3" y="6.4" width="3.4" height="3.4" fill="#fff"/><path d="M-0.2 13.7 C0 11.6 1.6 11 4.2 10.1 L6.3 9 H9.7 L11.8 10.1 C14.4 11 16 11.6 16.2 13.7 Z" fill="#fff"/></svg>
<svg style="position:absolute;left:1731.5px;top:14px;" width="15.4" height="11.6" viewBox="0 0 15.4 11.6"><path d="M0.4 5.4 L2.3 0.8 H13.4 L15 5.4" fill="none" stroke="#fff" stroke-width="1.1"/><path d="M0.2 5.3 H4.8 V7.7 H10.4 V5.3 H15.2 V11.4 H0.2 Z" fill="#fff"/></svg>
<div style="position:absolute;left:1739.8px;top:6.1px;width:12.2px;height:12.2px;box-sizing:border-box;background:#f0453a;border-radius:6.1px;"></div>
<span style="position:absolute;left:1743.5px;top:6.1px;line-height:12px;height:12px;white-space:pre;font-family:'Liberation Sans',sans-serif;font-size:8.6px;font-weight:700;font-style:normal;color:#fff;letter-spacing:-0.041px;">5</span>
<svg style="position:absolute;left:1762px;top:12px;" width="14.5" height="12" viewBox="0 0 14.5 12"><path d="M3.3 11.5 C0.1 8 0.1 3.5 3 1.4 C5.8 -0.6 9.6 0 11.6 2.4 L10 3.9 C8.4 2.2 6 1.9 4.3 3.1 C2.3 4.8 2.3 8 3.7 11.3 Z" fill="#fff"/><path d="M12.5 0.9 L13.6 7.2 L7.2 5.6 Z" fill="#fff"/></svg>
<svg style="position:absolute;left:1793px;top:11px;" width="12" height="15" viewBox="0 0 12 15"><circle cx="6" cy="5.6" r="5.3" fill="#7384c6"/><path d="M3.4 2 L6.2 1.4 L7 3 L5.4 4.6 L5.8 6.6 L4.2 8.2 L2.6 6 L1.6 4.4 Z M8.2 4.4 L10.4 5 L10.2 7.6 L8.6 9.2 L7.6 7 Z" fill="#2e4699"/><rect x="0.8" y="12" width="5.4" height="2.8" rx="1.4" fill="none" stroke="#7384c6" stroke-width="1"/><rect x="5.8" y="12" width="5.4" height="2.8" rx="1.4" fill="none" stroke="#7384c6" stroke-width="1"/></svg>
<span style="position:absolute;left:1823.9px;top:3.4px;line-height:30px;height:30px;white-space:pre;font-family:'Liberation Sans',sans-serif;font-size:21.5px;font-weight:700;font-style:normal;color:#fff;letter-spacing:0.000px;transform-origin:0 50%;transform:scaleX(0.8);-webkit-text-stroke:0.5px #fff;">?</span>
<svg style="position:absolute;left:1850px;top:10px;" width="16" height="16" viewBox="0 0 16 16"><path d="M4.3 3.6 A6.6 6.6 0 1 0 11.7 3.6" fill="none" stroke="#fff" stroke-width="2.6" stroke-linecap="butt"/><path d="M8 0.6 V8.6" stroke="#fff" stroke-width="2.6"/></svg>
<span style="position:absolute;left:1872.6px;top:7.9px;line-height:22px;height:22px;white-space:pre;font-family:'Liberation Sans',sans-serif;font-size:16px;font-weight:400;font-style:normal;color:#fff;letter-spacing:0.000px;-webkit-text-stroke:0.55px #fff;transform-origin:0 50%;transform:scaleX(0.8916);">EVI</span>
<svg style="position:absolute;left:1896px;top:12.4px;" width="4" height="4" viewBox="0 0 4 4"><circle cx="2" cy="2" r="1.5" fill="none" stroke="#c9d1ee" stroke-width="0.8"/></svg>
<svg style="position:absolute;left:1900px;top:10px;" width="9" height="16.5" viewBox="0 0 9 16.5"><path d="M4.3 0.3 C4.7 5 6.2 10.4 8.6 13.8 L3.8 14 Z" fill="#fff"/><path d="M3.7 2.6 C3.4 6.8 2.6 10.8 1.2 13.6 L3.3 13.8 Z" fill="#d5dbf2"/><path d="M0.1 15 C2.6 15.7 5.6 15.5 7.9 14.7 L7.3 15.9 C4.8 16.7 2.2 16.5 0.5 16 Z" fill="#fff"/></svg>
<span style="position:absolute;left:383.3px;top:354.2px;line-height:20px;height:20px;white-space:pre;font-family:'Liberation Sans',sans-serif;font-size:14px;font-weight:400;font-style:normal;color:#555555;letter-spacing:0.000px;transform-origin:0 50%;transform:scaleX(1.1130);">A</span>
<div style="position:absolute;left:380px;top:370px;width:16px;height:3px;box-sizing:border-box;background:#3a75b8;"></div>
<svg style="position:absolute;left:398px;top:365px;" width="5" height="3" viewBox="0 0 5 3"><path d="M0 0 H5 L2.5 2.8 Z" fill="#444"/></svg>
<span style="position:absolute;left:411px;top:355.3px;line-height:14px;height:14px;white-space:pre;font-family:'Liberation Sans',sans-serif;font-size:9.5px;font-weight:400;font-style:normal;color:#555555;letter-spacing:-0.539px;">ab</span>
<svg style="position:absolute;left:414px;top:357.5px;" width="14" height="12" viewBox="0 0 14 12"><path d="M11.6 0.8 L13 2 L5.6 9.6 L3.8 10.4 L4.4 8.6 Z" fill="#666"/><path d="M3.2 11 L6 9.8" stroke="#666" stroke-width="1"/></svg>
<div style="position:absolute;left:411px;top:369px;width:16px;height:4px;box-sizing:border-box;background:#ffff1a;"></div>
<svg style="position:absolute;left:429px;top:365px;" width="5" height="3" viewBox="0 0 5 3"><path d="M0 0 H5 L2.5 2.8 Z" fill="#444"/></svg>
<svg style="position:absolute;left:448.5px;top:357px;" width="8" height="10" viewBox="0 0 8 10"><path d="M0.7 8.8 L3.8 0.9 L6.2 8.6 M1.8 6.2 H5.4" fill="none" stroke="#666" stroke-width="1"/></svg>
<svg style="position:absolute;left:449.5px;top:359.5px;" width="14" height="14" viewBox="0 0 14 14"><g transform="rotate(-42 7 7)"><rect x="4.4" y="3.9" width="8.8" height="6.2" rx="0.8" fill="#e6849a"/><rect x="0.9" y="3.9" width="2.5" height="6.2" rx="0.6" fill="#e6849a"/></g></svg>
<svg style="position:absolute;left:477.6px;top:357.5px;" width="14.5" height="14" viewBox="0 0 14.5 14"><g><path d="M6.6 0.8 L1.9 4.3 L6.6 7.8" stroke="#3670b0" stroke-width="2.3" fill="none" stroke-linejoin="miter"/><path d="M2.6 4.3 H8.6 C12 4.3 13.1 6.6 13.1 8.4 C13.1 10.8 11.2 12.4 8.3 12.4" stroke="#3670b0" stroke-width="2.2" fill="none"/></g></svg>
<svg style="position:absolute;left:502.3px;top:357.5px;" width="14.5" height="14" viewBox="0 0 14.5 14"><g transform="translate(14.5 0) scale(-1 1)"><path d="M6.6 0.8 L1.9 4.3 L6.6 7.8" stroke="#c5d8ea" stroke-width="2.3" fill="none" stroke-linejoin="miter"/><path d="M2.6 4.3 H8.6 C12 4.3 13.1 6.6 13.1 8.4 C13.1 10.8 11.2 12.4 8.3 12.4" stroke="#c5d8ea" stroke-width="2.2" fill="none"/></g></svg>
<div style="position:absolute;left:531px;top:360px;width:14px;height:1.3px;box-sizing:border-box;background:#555555;"></div><div style="position:absolute;left:531px;top:363px;width:10px;height:1.3px;box-sizing:border-box;background:#555555;"></div><div style="position:absolute;left:531px;top:366px;width:14px;height:1.3px;box-sizing:border-box;background:#555555;"></div><div style="position:absolute;left:531px;top:369px;width:10px;height:1.3px;box-sizing:border-box;background:#555555;"></div>
<div style="position:absolute;left:555px;top:360px;width:14px;height:1.3px;box-sizing:border-box;background:#555555;"></div><div style="position:absolute;left:557px;top:363px;width:10px;height:1.3px;box-sizing:border-box;background:#555555;"></div><div style="position:absolute;left:555px;top:366px;width:14px;height:1.3px;box-sizing:border-box;background:#555555;"></div><div style="position:absolute;left:557px;top:369px;width:10px;height:1.3px;box-sizing:border-box;background:#555555;"></div>
<div style="position:absolute;left:579px;top:360px;width:14px;height:1.3px;box-sizing:border-box;background:#555555;"></div><div style="position:absolute;left:583px;top:363px;width:10px;height:1.3px;box-sizing:border-box;background:#555555;"></div><div style="position:absolute;left:579px;top:366px;width:14px;height:1.3px;box-sizing:border-box;background:#555555;"></div><div style="position:absolute;left:583px;top:369px;width:10px;height:1.3px;box-sizing:border-box;background:#555555;"></div>
<div style="position:absolute;left:603px;top:360px;width:14px;height:1.3px;box-sizing:border-box;background:#555555;"></div><div style="position:absolute;left:603px;top:363px;width:14px;height:1.3px;box-sizing:border-box;background:#555555;"></div><div style="position:absolute;left:603px;top:366px;width:14px;height:1.3px;box-sizing:border-box;background:#555555;"></div><div style="position:absolute;left:603px;top:369px;width:14px;height:1.3px;box-sizing:border-box;background:#555555;"></div>
<span style="position:absolute;left:632.3px;top:353.8px;line-height:10px;height:10px;white-space:pre;font-family:'Liberation Sans',sans-serif;font-size:6.5px;font-weight:700;font-style:normal;color:#3a75b8;letter-spacing:0.188px;">1</span>
<div style="position:absolute;left:638px;top:358px;width:9px;height:1.3px;box-sizing:border-box;background:#555555;"></div>
<div style="position:absolute;left:656.9px;top:357.2px;width:3px;height:3px;box-sizing:border-box;background:#3a75b8;border-radius:1.5px;"></div>
<div style="position:absolute;left:662px;top:358px;width:8px;height:1.3px;box-sizing:border-box;background:#555555;"></div>
<span style="position:absolute;left:632.3px;top:359.8px;line-height:10px;height:10px;white-space:pre;font-family:'Liberation Sans',sans-serif;font-size:6.5px;font-weight:700;font-style:normal;color:#3a75b8;letter-spacing:0.188px;">2</span>
<div style="position:absolute;left:638px;top:364px;width:9px;height:1.3px;box-sizing:border-box;background:#555555;"></div>
<div style="position:absolute;left:656.9px;top:363.2px;width:3px;height:3px;box-sizing:border-box;background:#3a75b8;border-radius:1.5px;"></div>
<div style="position:absolute;left:662px;top:364px;width:8px;height:1.3px;box-sizing:border-box;background:#555555;"></div>
<span style="position:absolute;left:632.3px;top:365.8px;line-height:10px;height:10px;white-space:pre;font-family:'Liberation Sans',sans-serif;font-size:6.5px;font-weight:700;font-style:normal;color:#3a75b8;letter-spacing:0.188px;">3</span>
<div style="position:absolute;left:638px;top:370px;width:9px;height:1.3px;box-sizing:border-box;background:#555555;"></div>
<div style="position:absolute;left:656.9px;top:369.2px;width:3px;height:3px;box-sizing:border-box;background:#3a75b8;border-radius:1.5px;"></div>
<div style="position:absolute;left:662px;top:370px;width:8px;height:1.3px;box-sizing:border-box;background:#555555;"></div>
<div style="position:absolute;left:683px;top:360px;width:13px;height:1.2px;box-sizing:border-box;background:#dcdcdc;"></div><div style="position:absolute;left:688px;top:363px;width:8px;height:1.2px;box-sizing:border-box;background:#dcdcdc;"></div><div style="position:absolute;left:688px;top:366px;width:8px;height:1.2px;box-sizing:border-box;background:#dcdcdc;"></div><div style="position:absolute;left:683px;top:369px;width:13px;height:1.2px;box-sizing:border-box;background:#dcdcdc;"></div>
<svg style="position:absolute;left:680px;top:362px;" width="7" height="6" viewBox="0 0 7 6"><path d="M7 3 H1.2 M3.4 0.6 L1 3 L3.4 5.4" stroke="#c5d9ee" stroke-width="1.3" fill="none"/></svg>
<div style="position:absolute;left:707px;top:360px;width:13px;height:1.2px;box-sizing:border-box;background:#dcdcdc;"></div><div style="position:absolute;left:712px;top:363px;width:8px;height:1.2px;box-sizing:border-box;background:#dcdcdc;"></div><div style="position:absolute;left:712px;top:366px;width:8px;height:1.2px;box-sizing:border-box;background:#dcdcdc;"></div><div style="position:absolute;left:707px;top:369px;width:13px;height:1.2px;box-sizing:border-box;background:#dcdcdc;"></div>
<svg style="position:absolute;left:704px;top:362px;" width="7" height="6" viewBox="0 0 7 6"><path d="M0 3 H5.8 M3.6 0.6 L6 3 L3.6 5.4" stroke="#c5d9ee" stroke-width="1.3" fill="none"/></svg>
<div style="position:absolute;left:732.5px;top:356.5px;width:13px;height:9.4px;overflow:hidden"><svg width="13" height="13" viewBox="0 0 13 13"><circle cx="6.4" cy="6.4" r="5.5" fill="none" stroke="#5a5a5a" stroke-width="1"/><ellipse cx="6.4" cy="6.4" rx="2.5" ry="5.5" fill="none" stroke="#5a5a5a" stroke-width="0.9"/><path d="M1.6 3.8 H11.2 M0.9 7.4 H11.9" stroke="#5a5a5a" stroke-width="0.9"/></svg></div>
<svg style="position:absolute;left:734px;top:366px;" width="15.5" height="7.2" viewBox="0 0 15.5 7.2"><rect x="1" y="1" width="8" height="5.2" rx="2.6" fill="none" stroke="#2f6db5" stroke-width="1.9"/><rect x="6.5" y="1" width="8" height="5.2" rx="2.6" fill="none" stroke="#2f6db5" stroke-width="1.9"/></svg>
<svg style="position:absolute;left:1154px;top:415.5px;" width="14" height="10.5" viewBox="0 0 14 10.5"><rect x="0.6" y="0.6" width="12.8" height="9.3" fill="none" stroke="#cfcfcf" stroke-width="1.2"/><path d="M2.4 8.2 L5.4 4.6 L7.4 6.8 L8.6 5.8 L11 8.2 Z" fill="#d6d6d6"/><circle cx="10.6" cy="3" r="0.9" fill="#d6d6d6"/></svg>
<svg style="position:absolute;left:1306.5px;top:412px;" width="15.5" height="16" viewBox="0 0 15.5 16"><path d="M0.6 0.6 H6.8 L9.4 3.2 V6 M0.6 0.6 V12.6 H3.6" fill="none" stroke="#8d99a0" stroke-width="1.1"/><path d="M2.2 3.4 H5.6 M2.2 5.6 H4.4" stroke="#9aa7ad" stroke-width="0.9"/><circle cx="7.8" cy="8.8" r="4.1" fill="#eef3f8" stroke="#5a5a5a" stroke-width="1.2"/><text x="7.8" y="11" font-family="Liberation Sans" font-size="6" font-weight="700" fill="#7d9cc8" text-anchor="middle">A</text><path d="M10.9 11.9 L14.6 15.4" stroke="#4a4a4a" stroke-width="1.8" stroke-linecap="round"/></svg>
<svg style="position:absolute;left:1446.3px;top:413px;" width="11.2" height="13" viewBox="0 0 11.2 13"><rect x="2" y="0.4" width="9" height="6.4" fill="#e9efe0" stroke="#a8b4a0" stroke-width="0.8"/><path d="M2.6 6.2 L5.2 3 L7 5 L8.2 4 L10.4 6.2 Z" fill="#4c9a3a"/><circle cx="9.4" cy="2" r="0.9" fill="#f0b429"/><path d="M0.4 8.6 H8.6 M0.4 10.6 H8.6 M0.4 12.4 H6" stroke="#444" stroke-width="1"/></svg>
<svg style="position:absolute;left:1153.5px;top:479px;" width="12" height="13.2" viewBox="0 0 12 13.2"><path d="M1 4.4 C1 3.6 2.2 3.6 2.4 4.4 V2 C2.4 1 3.8 1 4 2 V1 C4 0 5.6 0 5.6 1 V2 C5.8 1 7.2 1 7.2 2.2 V7.4 L9.6 5.8 C10.6 5.2 11.6 6 10.8 7 L7.4 11.8 C6.8 12.8 6 13 5 13 H3.4 C1.6 13 1 11.8 1 10.4 Z" fill="#f6b226"/><path d="M2.45 3 V6.6 M4.05 2 V6.4 M5.65 2.2 V6.4" stroke="#fbd98a" stroke-width="0.45"/><path d="M2.3 7.6 L5.3 10.6 M5.3 7.6 L2.3 10.6" stroke="#d92b1a" stroke-width="1.2"/></svg>
<svg style="position:absolute;left:1878px;top:445px;" width="16" height="16" viewBox="0 0 16 16"><path d="M0.2 0.2 L5.4 0.2 L0.2 5.4 Z" fill="#3f51b5"/><path d="M1.8 1.8 L6.4 6.4" stroke="#3f51b5" stroke-width="1.9"/><path d="M15.8 0.2 L10.600000000000001 0.2 L15.8 5.4 Z" fill="#3f51b5"/><path d="M14.200000000000001 1.8 L9.600000000000001 6.4" stroke="#3f51b5" stroke-width="1.9"/><path d="M0.2 15.8 L5.4 15.8 L0.2 10.600000000000001 Z" fill="#3f51b5"/><path d="M1.8 14.200000000000001 L6.4 9.600000000000001" stroke="#3f51b5" stroke-width="1.9"/><path d="M15.8 15.8 L10.600000000000001 15.8 L15.8 10.600000000000001 Z" fill="#3f51b5"/><path d="M14.200000000000001 14.200000000000001 L9.600000000000001 9.600000000000001" stroke="#3f51b5" stroke-width="1.9"/></svg>
</body></html>
